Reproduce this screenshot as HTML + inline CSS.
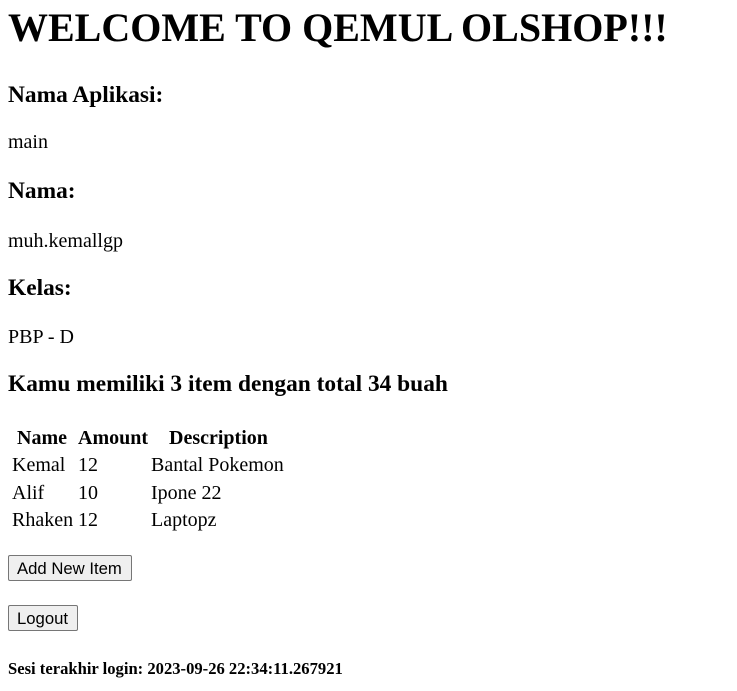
<!DOCTYPE html>
<html><head><meta charset="utf-8"><style>
body{margin:0;background:#fff;color:#000;font-family:"Liberation Serif",serif;}
.t{position:absolute;line-height:1;white-space:nowrap;margin:0}
.h1{font-size:40px;font-weight:bold}
.h3{font-size:23.4px;font-weight:bold}
.p{font-size:20px}
.b{font-weight:bold}
.btn{position:absolute;left:8px;height:26px;box-sizing:border-box;border:1px solid #767676;border-radius:2px;background:#efefef;font-family:"Liberation Sans",sans-serif;font-size:16.7px;line-height:25px;padding:0 8px;white-space:nowrap}
</style></head><body>
<div class="t h1" style="left:8px;top:8px">WELCOME TO QEMUL OLSHOP!!!</div>
<div class="t h3" style="left:8px;top:84.4px">Nama Aplikasi:</div>
<div class="t p" style="left:8px;top:132px">main</div>
<div class="t h3" style="left:8px;top:180.4px">Nama:</div>
<div class="t p" style="left:8px;top:231px">muh.kemallgp</div>
<div class="t h3" style="left:8px;top:277.4px">Kelas:</div>
<div class="t p" style="left:8px;top:327px">PBP - D</div>
<div class="t h3" style="left:8px;top:373.4px">Kamu memiliki 3 item dengan total 34 buah</div>
<div class="t p b" style="left:17px;top:428px">Name</div>
<div class="t p b" style="left:78px;top:428px">Amount</div>
<div class="t p b" style="left:169px;top:428px">Description</div>
<div class="t p" style="left:12px;top:455px">Kemal</div>
<div class="t p" style="left:78px;top:455px">12</div>
<div class="t p" style="left:151px;top:455px">Bantal Pokemon</div>
<div class="t p" style="left:12px;top:483px">Alif</div>
<div class="t p" style="left:78px;top:483px">10</div>
<div class="t p" style="left:151px;top:483px">Ipone 22</div>
<div class="t p" style="left:12px;top:510px">Rhaken</div>
<div class="t p" style="left:78px;top:510px">12</div>
<div class="t p" style="left:151px;top:510px">Laptopz</div>
<div class="btn" style="top:555px;width:124px">Add New Item</div>
<div class="btn" style="top:605px;width:70px">Logout</div>
<div class="t b" style="left:8px;top:661px;font-size:16.6px">Sesi terakhir login: 2023-09-26 22:34:11.267921</div>
</body></html>
